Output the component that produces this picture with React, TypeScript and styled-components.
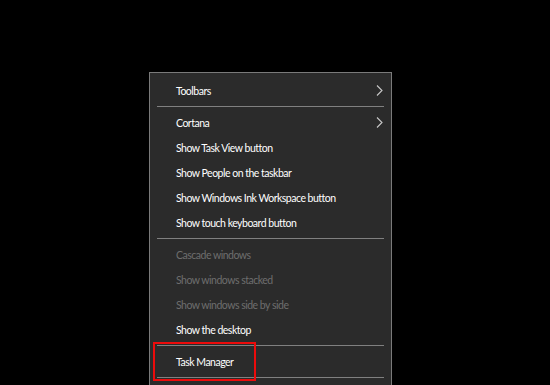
import * as React from "react";
import styled, { createGlobalStyle } from "styled-components";

const GlobalStyle = createGlobalStyle`
  html, body {
    margin: 0;
    padding: 0;
    background: #000;
    overflow: hidden;
  }
`;

const Page = styled.div`
  width: 550px;
  height: 385px;
  overflow: hidden;
  padding: 72px 0 0 149px;
  box-sizing: border-box;
  background: #000;
  font-family: Lato, "Noto Sans", sans-serif;
`;

const Menu = styled.div`
  width: 243px;
  box-sizing: border-box;
  background: #2b2b2b;
  border: 1px solid #7a7a7a;
  padding: 5px 0 40px;
  display: flex;
  flex-direction: column;
`;

const Row = styled.div<{ $disabled?: boolean }>`
  position: relative;
  height: 25px;
  display: flex;
  align-items: center;
  justify-content: space-between;
  padding: 0 8px 0 26px;
  font-size: 10.5px;
  letter-spacing: -0.5px;
  color: ${(p) => (p.$disabled ? "#6e6e6e" : "#fff")};
  white-space: nowrap;
`;

const Separator = styled.div`
  height: 1px;
  margin: 3px 7px;
  background: #808080;
`;

const Highlight = styled.div`
  position: absolute;
  top: -7px;
  left: 3px;
  width: 103px;
  height: 39px;
  box-sizing: border-box;
  border: 2px solid #ec0b0b;
  pointer-events: none;
`;

const Chevron = () => (
  <svg width="7" height="11" viewBox="0 0 7 11">
    <polyline
      points="1,0.5 6,5.5 1,10.5"
      fill="none"
      stroke="#c8c8c8"
      strokeWidth="1.1"
    />
  </svg>
);

type Item =
  | { kind: "sep" }
  | { kind: "item"; label: string; sub?: boolean; disabled?: boolean; marked?: boolean };

const items: Item[] = [
  { kind: "item", label: "Toolbars", sub: true },
  { kind: "sep" },
  { kind: "item", label: "Cortana", sub: true },
  { kind: "item", label: "Show Task View button" },
  { kind: "item", label: "Show People on the taskbar" },
  { kind: "item", label: "Show Windows Ink Workspace button" },
  { kind: "item", label: "Show touch keyboard button" },
  { kind: "sep" },
  { kind: "item", label: "Cascade windows", disabled: true },
  { kind: "item", label: "Show windows stacked", disabled: true },
  { kind: "item", label: "Show windows side by side", disabled: true },
  { kind: "item", label: "Show the desktop" },
  { kind: "sep" },
  { kind: "item", label: "Task Manager", marked: true },
  { kind: "sep" },
];

export default function App() {
  return (
    <>
      <GlobalStyle />
      <Page>
        <Menu>
          {items.map((it, i) =>
            it.kind === "sep" ? (
              <Separator key={i} />
            ) : (
              <Row key={i} $disabled={it.disabled}>
                <span>{it.label}</span>
                {it.sub && <Chevron />}
                {it.marked && <Highlight />}
              </Row>
            )
          )}
        </Menu>
      </Page>
    </>
  );
}
